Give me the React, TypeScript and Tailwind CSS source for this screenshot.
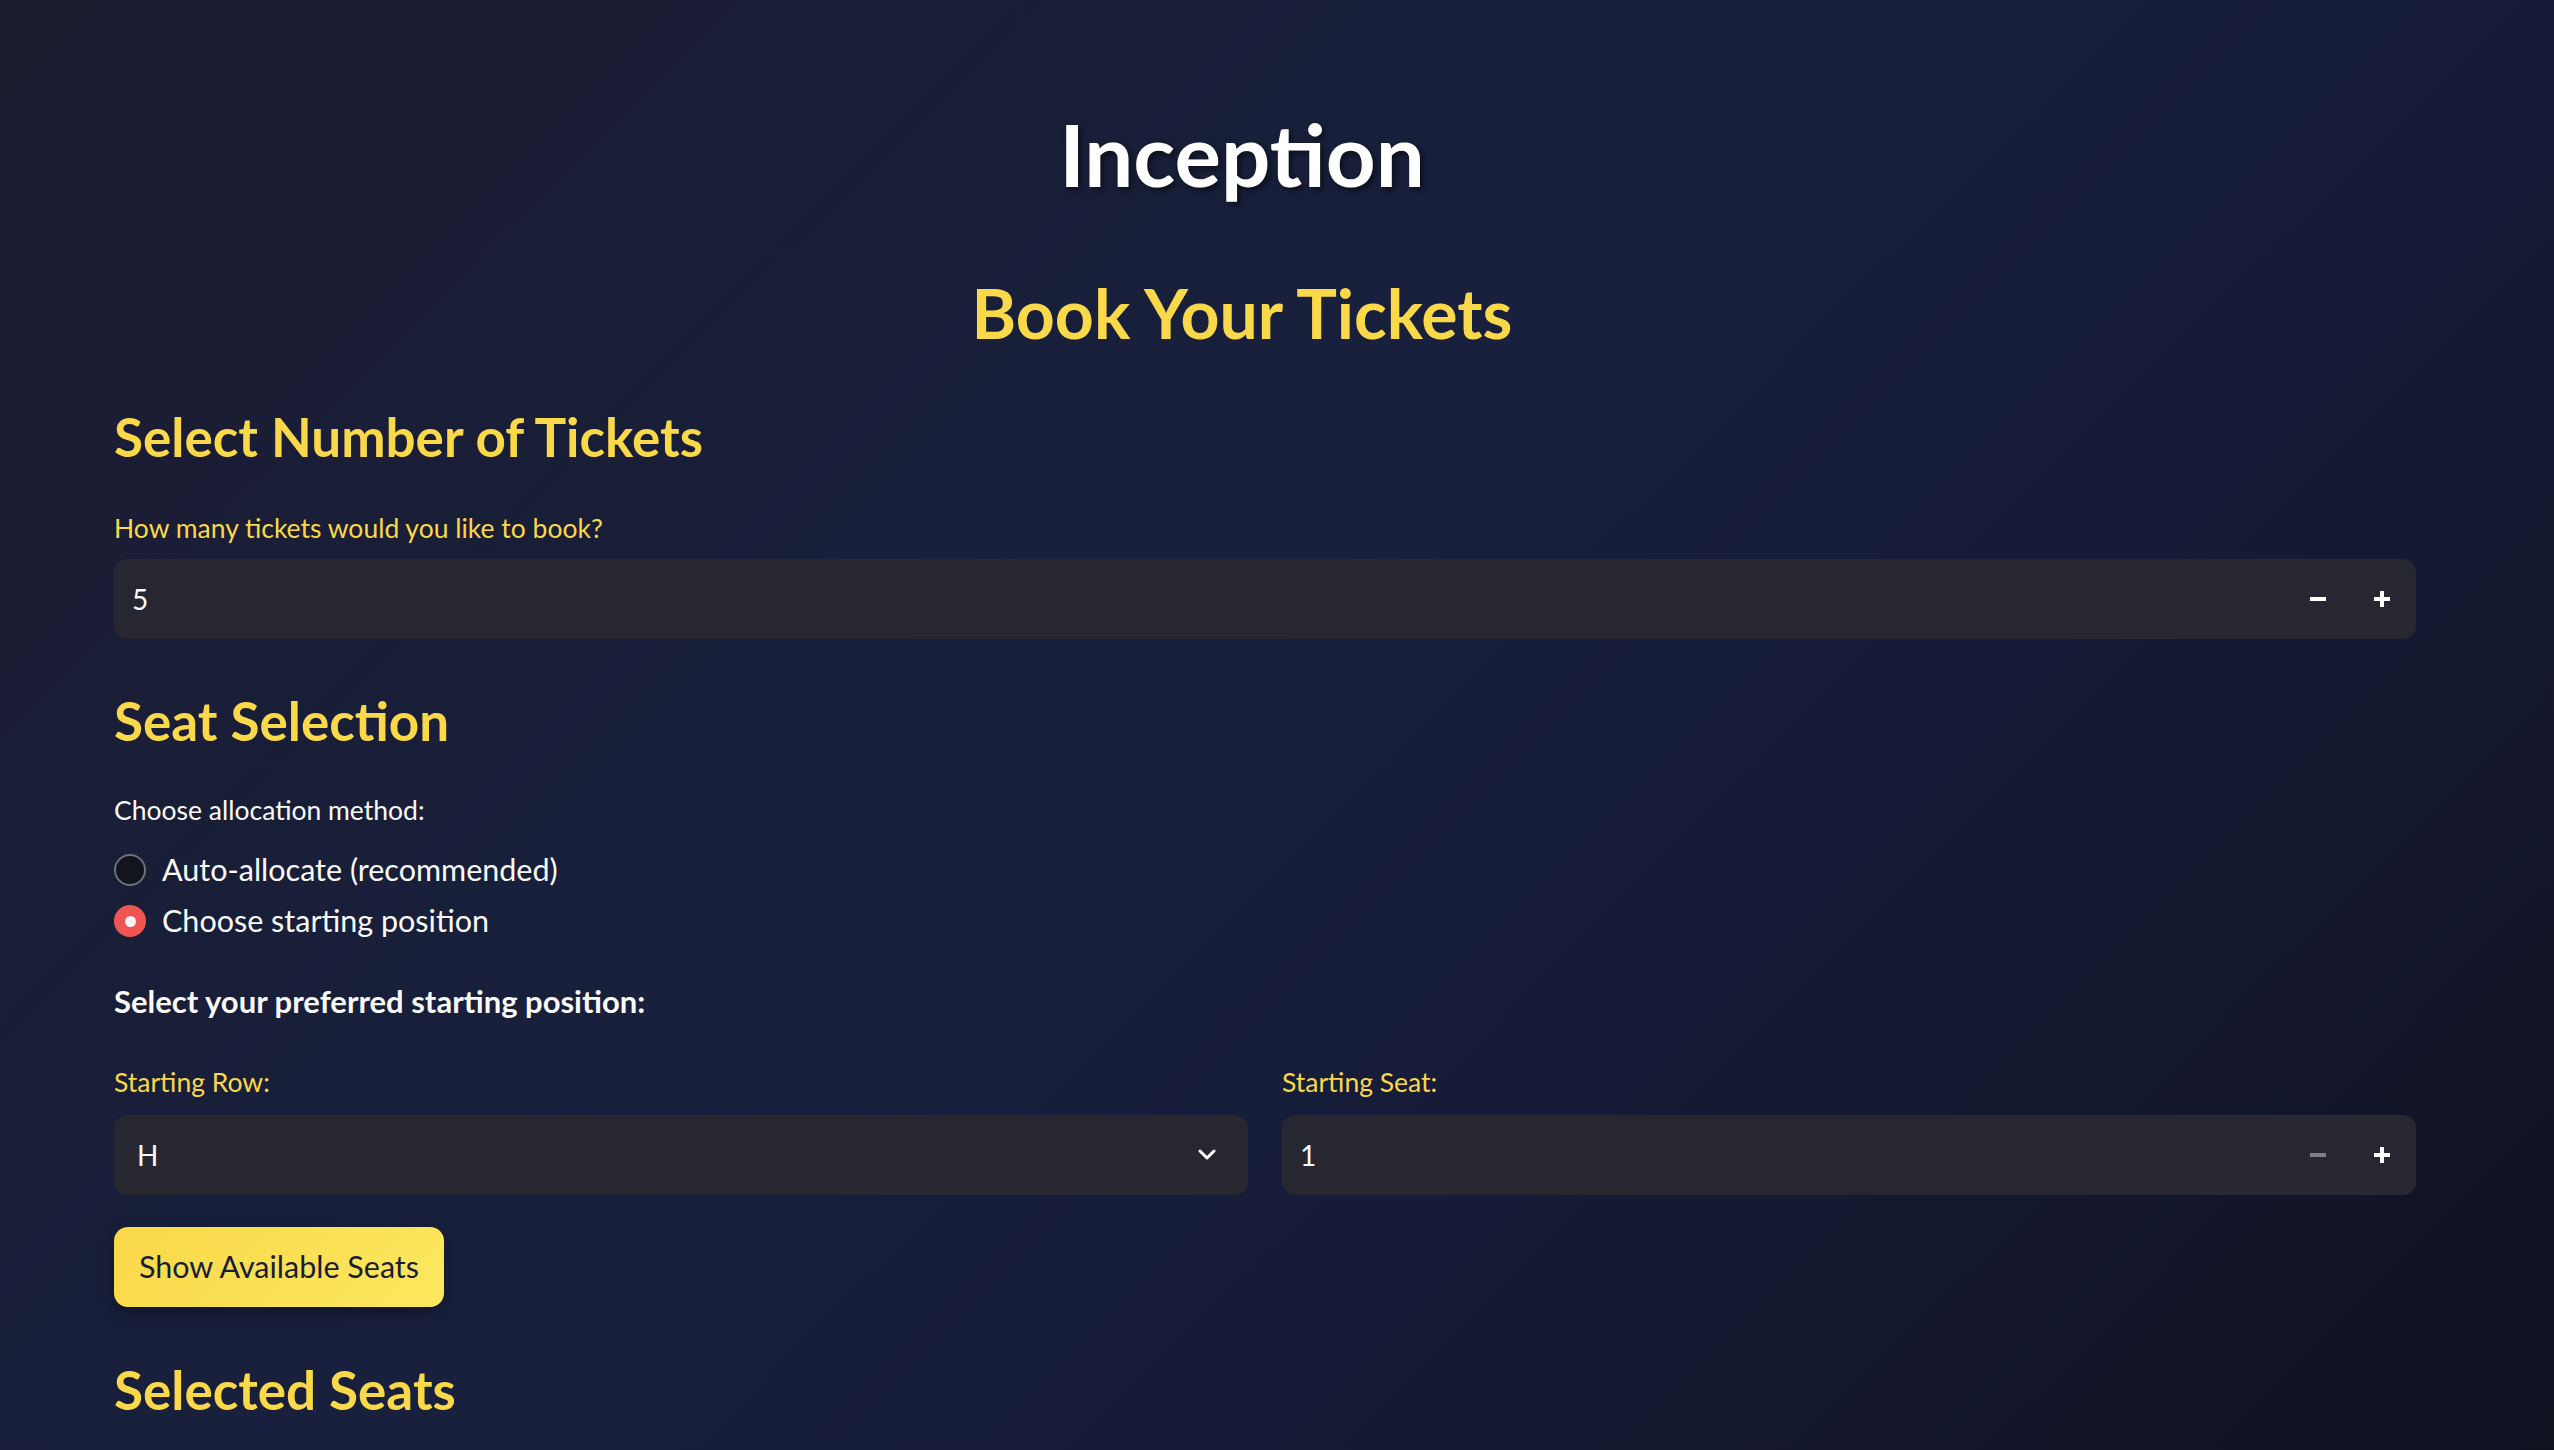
import React from "react";

const Minus = ({ color = "#ffffff" }: { color?: string }) => (
  <svg width="16" height="16" viewBox="0 0 16 16">
    <rect x="0" y="6" width="16" height="4" fill={color} />
  </svg>
);

const Plus = () => (
  <svg width="16" height="16" viewBox="0 0 16 16">
    <rect x="0" y="6" width="16" height="4" fill="#ffffff" />
    <rect x="6" y="0" width="4" height="16" fill="#ffffff" />
  </svg>
);

const Chevron = () => (
  <svg width="18" height="12" viewBox="0 0 18 12">
    <path d="M2 2 L9 9 L16 2" fill="none" stroke="#ffffff" strokeWidth="3" strokeLinecap="round" strokeLinejoin="round" />
  </svg>
);

function NumberInput({ value, minusDisabled }: { value: string; minusDisabled?: boolean }) {
  return (
    <div className="flex h-[80px] items-center rounded-[13px] bg-[#262730] pl-[18px] pr-[2px]">
      <span className="flex-1 text-[28px] text-[#fafafa]">{value}</span>
      <div className="flex h-full items-center justify-center w-[64px]">
        <Minus color={minusDisabled ? "#7d808a" : "#ffffff"} />
      </div>
      <div className="flex h-full items-center justify-center w-[64px]">
        <Plus />
      </div>
    </div>
  );
}

export default function App() {
  return (
    <div
      className="min-h-screen w-full bg-[linear-gradient(135deg,#1b1c30_0%,#18203d_45%,#161c38_65%,#10111f_100%)] pl-[114px] pr-[138px] pb-[40px]"
      style={{ fontFamily: "Lato, 'Noto Sans', sans-serif" }}
    >
      <h1 className="pt-[102px] pr-[46px] text-center text-[87px] font-bold leading-[1.2] text-white [text-shadow:3px_3px_6px_rgba(0,0,0,0.55)]">
        Inception
      </h1>
      <h2 className="mt-[66px] pr-[46px] text-center text-[68px] font-bold leading-[1.2] text-[#f9d84a]">
        Book Your Tickets
      </h2>
      <h3 className="mt-[51px] text-[53px] font-bold leading-[1.2] text-[#f9d84a]">
        Select Number of Tickets
      </h3>
      <div className="mt-[44px] text-[26.5px] leading-[1.2] text-[#f9d84a]">
        How many tickets would you like to book?
      </div>
      <div className="mt-[15px]">
        <NumberInput value="5" />
      </div>
      <h3 className="mt-[50px] text-[53px] font-bold leading-[1.2] text-[#f9d84a]">
        Seat Selection
      </h3>
      <div className="mt-[42px] text-[26.5px] leading-[1.2] text-[#fafafa]">Choose allocation method:</div>
      <div className="mt-[18px] flex flex-col">
        <div className="flex h-[51px] items-center gap-[16px]">
          <div className="h-[32px] w-[32px] rounded-full border-2 border-[#6d707b] bg-[#12141e]" />
          <span className="text-[30.5px] text-[#fafafa]">Auto-allocate (recommended)</span>
        </div>
        <div className="flex h-[51px] items-center gap-[16px]">
          <div className="flex h-[32px] w-[32px] items-center justify-center rounded-full bg-[#ef5653]">
            <div className="h-[11px] w-[11px] rounded-full bg-[#f5f5f7]" />
          </div>
          <span className="text-[30.5px] text-[#fafafa]">Choose starting position</span>
        </div>
      </div>
      <div className="mt-[36px] text-[31px] font-bold leading-[1.2] text-[#fafafa]">
        Select your preferred starting position:
      </div>
      <div className="mt-[47px] grid grid-cols-2 gap-[34px]">
        <div className="flex flex-col">
          <div className="text-[26.5px] leading-[1.2] text-[#f9d84a]">Starting Row:</div>
          <div className="mt-[16px] flex h-[80px] items-center rounded-[13px] bg-[#262730] pl-[23px] pr-[32px]">
            <span className="flex-1 text-[28px] text-[#fafafa]">H</span>
            <Chevron />
          </div>
        </div>
        <div className="flex flex-col">
          <div className="text-[26.5px] leading-[1.2] text-[#f9d84a]">Starting Seat:</div>
          <div className="mt-[16px]">
            <NumberInput value="1" minusDisabled />
          </div>
        </div>
      </div>
      <div className="mt-[32px]">
        <button className="h-[80px] rounded-[14px] bg-[linear-gradient(135deg,#f9d849_0%,#fce85f_100%)] px-[25px] text-[30.5px] text-[#1a1d33] shadow-[0_6px_16px_rgba(0,0,0,0.35)]">
          Show Available Seats
        </button>
      </div>
      <h3 className="mt-[51px] text-[53px] font-bold leading-[1.2] text-[#f9d84a]">Selected Seats</h3>
    </div>
  );
}
